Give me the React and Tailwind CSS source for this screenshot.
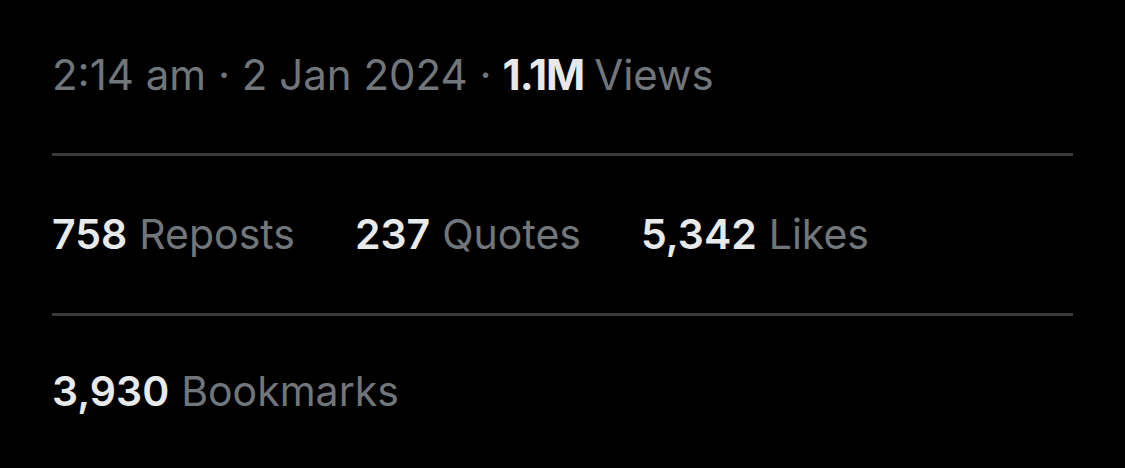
export default function App() {
  const stats = [
    { n: "758", label: "Reposts" },
    { n: "237", label: "Quotes" },
    { n: "5,342", label: "Likes" },
  ];

  return (
    <div className="min-h-screen w-full bg-black px-[52px]" style={{ fontFamily: "Inter, 'Noto Sans', sans-serif" }}>
      <div className="h-[153px] pb-[4px] flex items-center text-[42px] text-[#71767b] whitespace-nowrap">
        <span>2:14 am · 2 Jan 2024 · </span>
        <span className="font-bold text-[#e7e9ea] ml-[11px] tracking-[-1px]">1.1M</span>
        <span className="ml-[10px]">Views</span>
      </div>
      <div className="h-[3px] bg-[#38393c]" />
      <div className="h-[157px] flex items-center gap-[60px] text-[41px] whitespace-nowrap">
        {stats.map(s => (
          <div key={s.label} className="flex items-center gap-[12px]">
            <span className="font-semibold text-[#e7e9ea]">{s.n}</span>
            <span className="text-[#71767b]">{s.label}</span>
          </div>
        ))}
      </div>
      <div className="h-[3px] bg-[#38393c]" />
      <div className="h-[152px] flex items-center gap-[12px] text-[41px] whitespace-nowrap">
        <span className="font-semibold text-[#e7e9ea]">3,930</span>
        <span className="text-[#71767b]">Bookmarks</span>
      </div>
    </div>
  );
}
